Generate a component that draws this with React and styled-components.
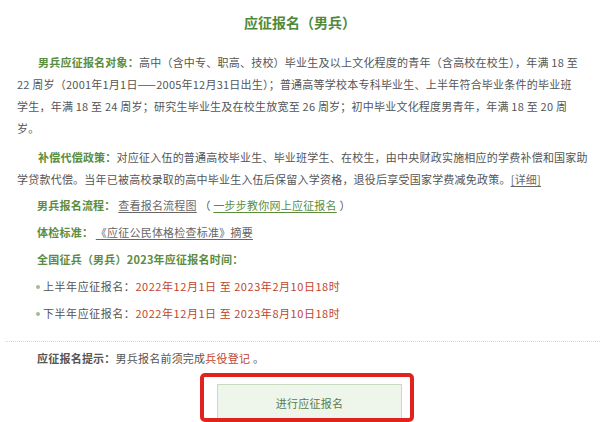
import React from "react";
import styled, { createGlobalStyle } from "styled-components";

const GlobalStyle = createGlobalStyle`
  html, body {
    margin: 0;
    padding: 0;
    background: #fff;
  }
  body {
    font-family: "Noto Sans CJK SC", "Noto Sans", sans-serif;
    color: #555;
  }
`;

const Page = styled.div`
  width: 600px;
  height: 422px;
  overflow: hidden;
  box-sizing: border-box;
  padding-top: 11px;
`;

const Title = styled.h2`
  margin: 0 0 18px;
  font-size: 14px;
  line-height: 22px;
  font-weight: 700;
  color: #4f8a3a;
  text-align: center;
`;

const Content = styled.div`
  padding: 0 6px 0 17px;
  font-size: 11px;
  letter-spacing: 0.22px;
  white-space: nowrap;
`;

const Para = styled.p`
  margin: 0 0 ${(p) => p.$gap || 0}px;
  line-height: 22px;
  text-indent: 21px;
`;

const Row = styled.div`
  line-height: 27px;
  padding-left: ${(p) => (p.$bullet ? 25 : 20)}px;
  letter-spacing: ${(p) => (p.$bullet ? "0.55px" : "0.22px")};
`;

const Dot = styled.span`
  display: inline-block;
  width: 4px;
  height: 4px;
  border-radius: 50%;
  background: #9cc18c;
  vertical-align: middle;
  margin: 0 3px 2px -6px;
`;

const Label = styled.strong`
  color: ${(p) => (p.$dark ? "#555" : "#5b8d3f")};
  font-weight: 700;
`;

const GrayLink = styled.a`
  color: #666;
  text-decoration: underline;
  text-underline-offset: 2px;
`;

const GreenLink = styled.a`
  color: #5b8d3f;
  text-decoration: underline;
  text-underline-offset: 2px;
`;

const Red = styled.span`
  color: #c0452a;
`;

const Divider = styled.hr`
  margin: 14px 0 5px 5px;
  border: none;
  border-top: 1px dotted #d4d4d4;
  height: 0;
`;

const Tip = styled.div`
  padding-left: 37px;
  font-size: 11px;
  letter-spacing: 0.22px;
  line-height: 22px;
`;

const ButtonArea = styled.div`
  display: flex;
  padding: 15px 0 0 217px;
`;

const ButtonWrap = styled.div`
  position: relative;
`;

const Button = styled.button`
  width: 185px;
  height: 37px;
  border: 1px solid #c8dbbf;
  background: #eef5ea;
  color: #5a7d4a;
  font-family: "Noto Sans CJK SC", sans-serif;
  font-size: 11px;
  letter-spacing: 0.22px;
  cursor: pointer;
`;

const Highlight = styled.span`
  position: absolute;
  left: -17px;
  right: -12px;
  top: -11px;
  bottom: -1px;
  border: 4px solid #e0231f;
  border-radius: 5px;
  pointer-events: none;
`;

export default function App() {
  return (
    <Page>
      <GlobalStyle />
      <Title>应征报名（男兵）</Title>
      <Content>
        <Para $gap={7}>
          <Label>男兵应征报名对象：</Label>
          高中（含中专、职高、技校）毕业生及以上文化程度的青年（含高校在校生），年满 18 至
          <br />
          22 周岁（2001年1月1日——2005年12月31日出生）；普通高等学校本专科毕业生、上半年符合毕业条件的毕业班
          <br />
          学生，年满 18 至 24 周岁；研究生毕业生及在校生放宽至 26 周岁；初中毕业文化程度男青年，年满 18 至 20 周
          <br />
          岁。
        </Para>
        <Para $gap={2}>
          <Label>补偿代偿政策：</Label>
          对应征入伍的普通高校毕业生、毕业班学生、在校生，由中央财政实施相应的学费补偿和国家助
          <br />
          学贷款代偿。当年已被高校录取的高中毕业生入伍后保留入学资格，退役后享受国家学费减免政策。<GrayLink>[详细]</GrayLink>
        </Para>
        <Row>
          <Label>男兵报名流程：</Label> <GrayLink>查看报名流程图</GrayLink> （ <GreenLink>一步步教你网上应征报名</GreenLink> ）
        </Row>
        <Row>
          <Label>体检标准：</Label> <GrayLink>《应征公民体格检查标准》摘要</GrayLink>
        </Row>
        <Row>
          <Label>全国征兵（男兵）2023年应征报名时间：</Label>
        </Row>
        <Row $bullet>
          <Dot />上半年应征报名：<Red>2022年12月1日 至 2023年2月10日18时</Red>
        </Row>
        <Row $bullet>
          <Dot />下半年应征报名：<Red>2022年12月1日 至 2023年8月10日18时</Red>
        </Row>
      </Content>
      <Divider />
      <Tip>
        <Label $dark>应征报名提示：</Label>男兵报名前须完成<Red>兵役登记</Red> 。
      </Tip>
      <ButtonArea>
        <ButtonWrap>
          <Button>进行应征报名</Button>
          <Highlight />
        </ButtonWrap>
      </ButtonArea>
    </Page>
  );
}
